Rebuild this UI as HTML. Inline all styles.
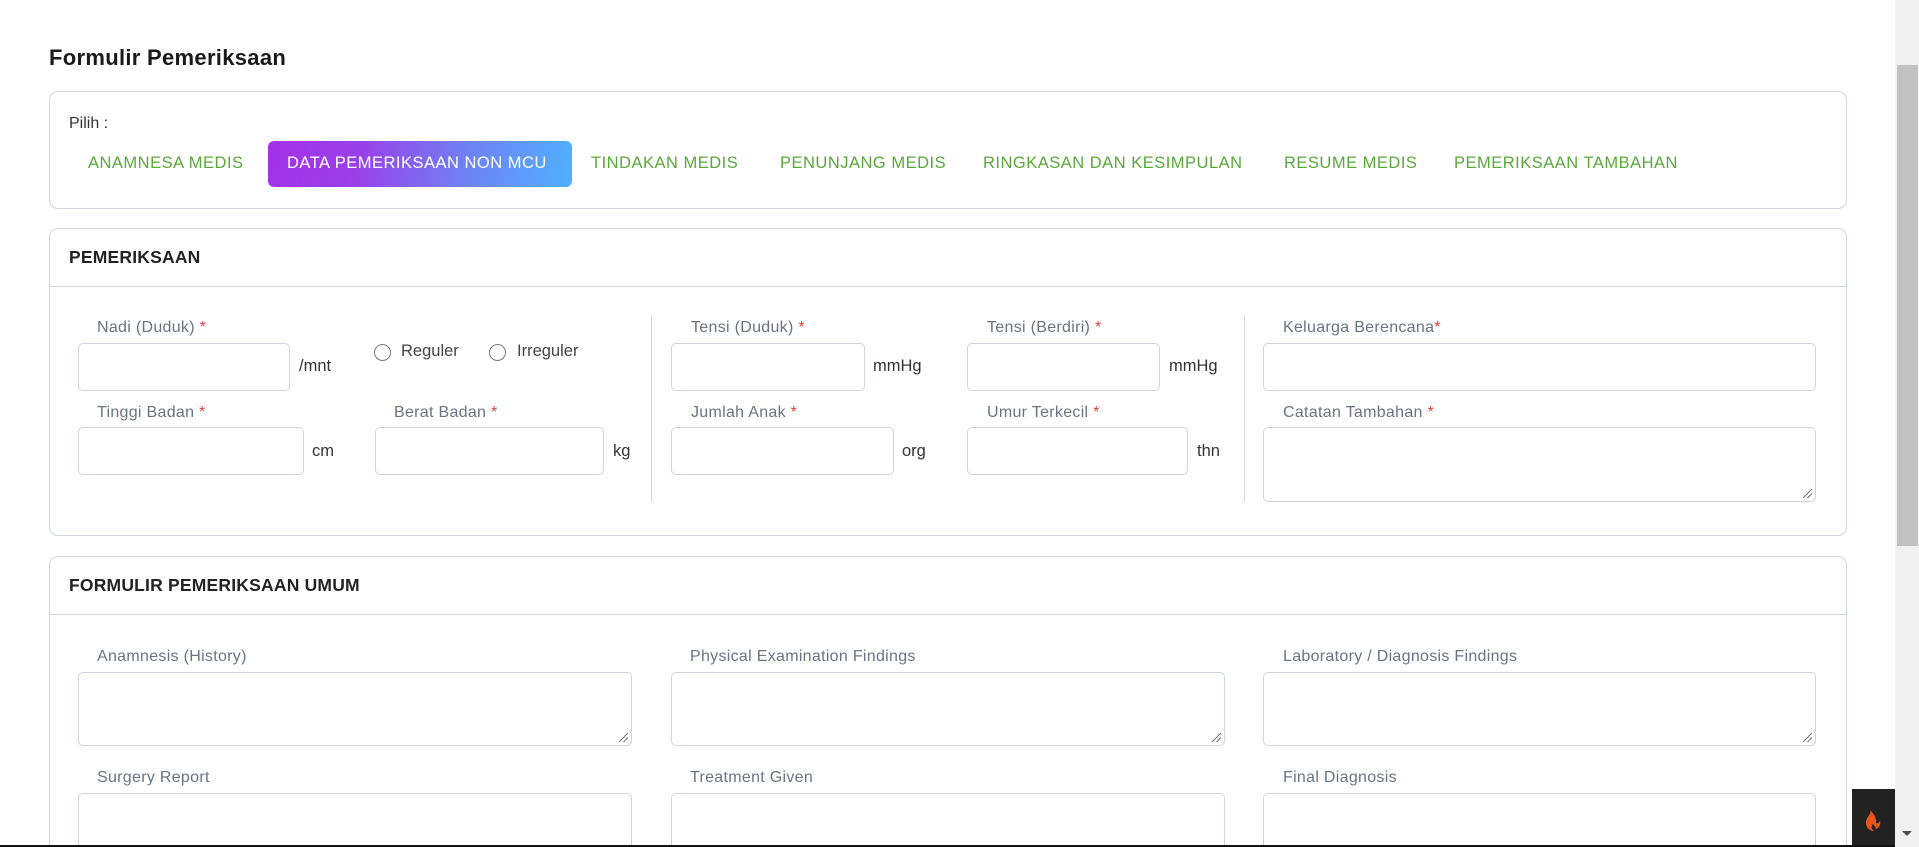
<!DOCTYPE html>
<html><head><meta charset="utf-8"><style>
*{box-sizing:border-box;margin:0;padding:0}
html{width:1919px;height:847px;overflow:hidden}
body{width:1919px;height:847px;overflow:hidden;background:#fff;font-family:"Liberation Sans",sans-serif;position:relative;color:#333}
.a{position:absolute}
.card{position:absolute;border:1px solid #d3d7e3;border-radius:9px;background:#fff}
.tab{position:absolute;top:154px;font-size:16.5px;letter-spacing:0.5px;color:#5aa83a;white-space:nowrap}
.lbl{position:absolute;font-size:16px;letter-spacing:0.3px;color:#6c7280;white-space:nowrap}
.lbl i{font-style:normal;color:#e04040}
.inp{position:absolute;border:1px solid #cfd3df;border-radius:5px;background:#fff}
.u{position:absolute;font-size:16.5px;color:#333}
.hd{position:absolute;font-size:17.5px;font-weight:bold;letter-spacing:0.2px;color:#222}
.vd{position:absolute;width:1px;background:#d6d9e2}
.rad{position:absolute;width:17px;height:17px;border:1px solid #777;border-radius:50%}
.rs{position:absolute;right:3px;bottom:3px;width:9px;height:9px;background:linear-gradient(135deg,transparent 45%,#777 45%,#777 55%,transparent 55%,transparent 70%,#777 70%,#777 80%,transparent 80%)}
</style></head><body>
<div class="a" style="left:49px;top:45px;font-size:22px;font-weight:bold;letter-spacing:0.3px;color:#1a1a1a">Formulir Pemeriksaan</div>

<div class="card" style="left:49px;top:91px;width:1798px;height:118px"></div>
<div class="a" style="left:69px;top:115px;font-size:16px;color:#333">Pilih :</div>
<div class="tab" style="left:88px">ANAMNESA MEDIS</div>
<div class="a" style="left:268px;top:141px;width:304px;height:46px;border-radius:6px;background:linear-gradient(100deg,#a331e6 0%,#9a40ea 30%,#6f82f3 65%,#4fb1ff 100%)"></div>
<div class="tab" style="left:287px;color:#fff">DATA PEMERIKSAAN NON MCU</div>
<div class="tab" style="left:591px">TINDAKAN MEDIS</div>
<div class="tab" style="left:780px">PENUNJANG MEDIS</div>
<div class="tab" style="left:983px">RINGKASAN DAN KESIMPULAN</div>
<div class="tab" style="left:1284px">RESUME MEDIS</div>
<div class="tab" style="left:1454px">PEMERIKSAAN TAMBAHAN</div>

<div class="card" style="left:49px;top:228px;width:1798px;height:308px"></div>
<div class="a" style="left:50px;top:286px;width:1796px;height:1px;background:#d6d9e2"></div>
<div class="hd" style="left:69px;top:247px">PEMERIKSAAN</div>

<div class="lbl" style="left:97px;top:319px">Nadi (Duduk) <i>*</i></div>
<div class="inp" style="left:78px;top:343px;width:212px;height:48px"></div>
<div class="u" style="left:299px;top:357px">/mnt</div>
<div class="rad" style="left:374px;top:344px"></div><div class="u" style="left:401px;top:342px;color:#444">Reguler</div>
<div class="rad" style="left:489px;top:344px"></div><div class="u" style="left:517px;top:342px;color:#444">Irreguler</div>
<div class="lbl" style="left:97px;top:404px">Tinggi Badan <i>*</i></div>
<div class="inp" style="left:78px;top:427px;width:226px;height:48px"></div>
<div class="u" style="left:312px;top:442px">cm</div>
<div class="lbl" style="left:394px;top:404px">Berat Badan <i>*</i></div>
<div class="inp" style="left:375px;top:427px;width:229px;height:48px"></div>
<div class="u" style="left:613px;top:442px">kg</div>
<div class="vd" style="left:651px;top:316px;height:186px"></div>

<div class="lbl" style="left:691px;top:319px">Tensi (Duduk) <i>*</i></div>
<div class="inp" style="left:671px;top:343px;width:194px;height:48px"></div>
<div class="u" style="left:873px;top:357px">mmHg</div>
<div class="lbl" style="left:987px;top:319px">Tensi (Berdiri) <i>*</i></div>
<div class="inp" style="left:967px;top:343px;width:193px;height:48px"></div>
<div class="u" style="left:1169px;top:357px">mmHg</div>
<div class="lbl" style="left:691px;top:404px">Jumlah Anak <i>*</i></div>
<div class="inp" style="left:671px;top:427px;width:223px;height:48px"></div>
<div class="u" style="left:902px;top:442px">org</div>
<div class="lbl" style="left:987px;top:404px">Umur Terkecil <i>*</i></div>
<div class="inp" style="left:967px;top:427px;width:221px;height:48px"></div>
<div class="u" style="left:1197px;top:442px">thn</div>
<div class="vd" style="left:1244px;top:316px;height:186px"></div>

<div class="lbl" style="left:1283px;top:319px">Keluarga Berencana<i>*</i></div>
<div class="inp" style="left:1263px;top:343px;width:553px;height:48px"></div>
<div class="lbl" style="left:1283px;top:404px">Catatan Tambahan <i>*</i></div>
<div class="inp" style="left:1263px;top:427px;width:553px;height:75px"><div class="rs"></div></div>

<div class="card" style="left:49px;top:556px;width:1798px;height:320px"></div>
<div class="a" style="left:50px;top:614px;width:1796px;height:1px;background:#d6d9e2"></div>
<div class="hd" style="left:69px;top:575px">FORMULIR PEMERIKSAAN UMUM</div>

<div class="lbl" style="left:97px;top:648px">Anamnesis (History)</div>
<div class="inp" style="left:78px;top:672px;width:554px;height:74px"><div class="rs"></div></div>
<div class="lbl" style="left:690px;top:648px">Physical Examination Findings</div>
<div class="inp" style="left:671px;top:672px;width:554px;height:74px"><div class="rs"></div></div>
<div class="lbl" style="left:1283px;top:648px">Laboratory / Diagnosis Findings</div>
<div class="inp" style="left:1263px;top:672px;width:553px;height:74px"><div class="rs"></div></div>
<div class="lbl" style="left:97px;top:769px">Surgery Report</div>
<div class="inp" style="left:78px;top:793px;width:554px;height:74px"></div>
<div class="lbl" style="left:690px;top:769px">Treatment Given</div>
<div class="inp" style="left:671px;top:793px;width:554px;height:74px"></div>
<div class="lbl" style="left:1283px;top:769px">Final Diagnosis</div>
<div class="inp" style="left:1263px;top:793px;width:553px;height:74px"></div>

<div class="a" style="left:0;top:845px;width:1919px;height:40px;background:#fff"></div>
<div class="a" style="left:0;top:845px;width:1895px;height:2px;background:#111"></div>
<div class="a" style="left:1895px;top:0;width:24px;height:847px;background:#f1f1f1"></div>
<div class="a" style="left:1897px;top:65px;width:21px;height:481px;background:#c1c1c1"></div>
<div class="a" style="left:1902px;top:831px;width:0;height:0;border-left:5px solid transparent;border-right:5px solid transparent;border-top:5px solid #505050"></div>
<div class="a" style="left:1852px;top:789px;width:43px;height:56px;background:#222"></div>
<svg class="a" style="left:1862px;top:808px" width="22" height="24" viewBox="0 0 22 24"><path d="M8 2C10 6 4 9 4 15c0 5 4 8 8 8-3-2-3-5-1-7 1 2 3 3 3 5 3-1 5-4 4-8-1 2-3 3-4 2 1-5-2-9-6-13z" fill="#e9541c"/></svg>
</body></html>
